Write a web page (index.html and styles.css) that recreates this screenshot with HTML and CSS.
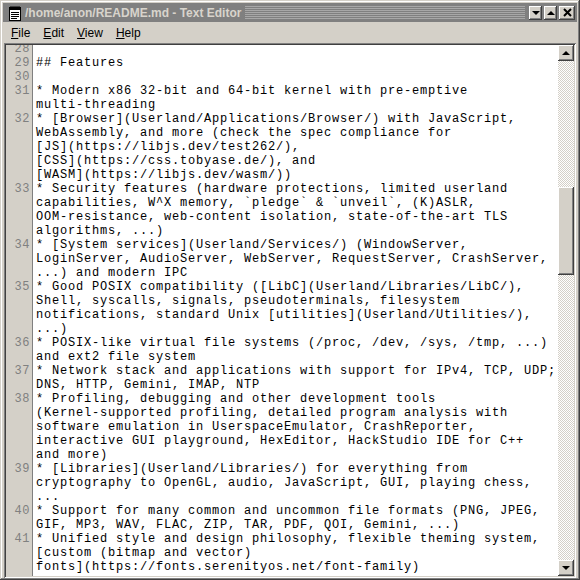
FILE: index.html
```html
<!DOCTYPE html>
<html lang="en">
  <head>
    <link rel="stylesheet" href="styles.css">
  </head>
  <body>
    <div class="window">
      <div class="titlebar">
        <svg class="app-icon" width="16" height="16" viewBox="0 0 16 16">
          <rect x="2.5" y="2.5" width="11" height="13" fill="#fff" stroke="#000"/>
          <rect x="2" y="2" width="12" height="3" fill="#000"/>
          <path d="M4 1v3M6 1v3M8 1v3M10 1v3M12 1v3" stroke="#000"/>
          <path d="M4 7.5h8M4 9.5h8M4 11.5h8M4 13.5h6" stroke="#000"/>
        </svg>
        <span class="title-text">/home/anon/README.md - Text Editor</span>
        <div class="stripes"></div>
        <div class="title-btns">
          <button class="tbtn"><span class="tri-down"></span></button>
          <button class="tbtn"><span class="tri-up"></span></button>
          <button class="tbtn close">
            <svg width="9" height="9" viewBox="0 0 9 9"><path d="M1 1l7 7M8 1l-7 7" stroke="#000" stroke-width="2"/></svg>
          </button>
        </div>
      </div>

      <div class="menubar">
        <span class="menu-item"><u>F</u>ile</span>
        <span class="menu-item"><u>E</u>dit</span>
        <span class="menu-item"><u>V</u>iew</span>
        <span class="menu-item"><u>H</u>elp</span>
      </div>

      <div class="editor-frame">
        <div class="editor">
          <div class="lines">
            <div class="row"><span class="num">28</span><span class="txt"></span></div>
            <div class="row"><span class="num">29</span><span class="txt">## Features</span></div>
            <div class="row"><span class="num">30</span><span class="txt"></span></div>
            <div class="row"><span class="num">31</span><span class="txt">* Modern x86 32-bit and 64-bit kernel with pre-emptive
multi-threading</span></div>
            <div class="row"><span class="num">32</span><span class="txt">* [Browser](Userland/Applications/Browser/) with JavaScript,
WebAssembly, and more (check the spec compliance for
[JS](https://libjs.dev/test262/),
[CSS](https://css.tobyase.de/), and
[WASM](https://libjs.dev/wasm/))</span></div>
            <div class="row"><span class="num">33</span><span class="txt">* Security features (hardware protections, limited userland
capabilities, W^X memory, `pledge` &amp; `unveil`, (K)ASLR,
OOM-resistance, web-content isolation, state-of-the-art TLS
algorithms, ...)</span></div>
            <div class="row"><span class="num">34</span><span class="txt">* [System services](Userland/Services/) (WindowServer,
LoginServer, AudioServer, WebServer, RequestServer, CrashServer,
...) and modern IPC</span></div>
            <div class="row"><span class="num">35</span><span class="txt">* Good POSIX compatibility ([LibC](Userland/Libraries/LibC/),
Shell, syscalls, signals, pseudoterminals, filesystem
notifications, standard Unix [utilities](Userland/Utilities/),
...)</span></div>
            <div class="row"><span class="num">36</span><span class="txt">* POSIX-like virtual file systems (/proc, /dev, /sys, /tmp, ...)
and ext2 file system</span></div>
            <div class="row"><span class="num">37</span><span class="txt">* Network stack and applications with support for IPv4, TCP, UDP;
DNS, HTTP, Gemini, IMAP, NTP</span></div>
            <div class="row"><span class="num">38</span><span class="txt">* Profiling, debugging and other development tools
(Kernel-supported profiling, detailed program analysis with
software emulation in UserspaceEmulator, CrashReporter,
interactive GUI playground, HexEditor, HackStudio IDE for C++
and more)</span></div>
            <div class="row"><span class="num">39</span><span class="txt">* [Libraries](Userland/Libraries/) for everything from
cryptography to OpenGL, audio, JavaScript, GUI, playing chess,
...</span></div>
            <div class="row"><span class="num">40</span><span class="txt">* Support for many common and uncommon file formats (PNG, JPEG,
GIF, MP3, WAV, FLAC, ZIP, TAR, PDF, QOI, Gemini, ...)</span></div>
            <div class="row"><span class="num">41</span><span class="txt">* Unified style and design philosophy, flexible theming system,
[custom (bitmap and vector)
fonts](https://fonts.serenityos.net/font-family)</span></div>
          </div>
        </div>

        <div class="scrollbar">
          <button class="sbtn"><span class="tri-up"></span></button>
          <div class="track">
            <div class="thumb"></div>
          </div>
          <button class="sbtn"><span class="tri-down"></span></button>
        </div>
      </div>
    </div>
  </body>
</html>
```

FILE: styles.css
```css
body {
  margin: 0;
  padding: 0;
  width: 580px;
  height: 580px;
  background-color: #d4d0c8;
  overflow: hidden;
}

div.window {
  box-sizing: border-box;
  width: 580px;
  height: 580px;
  display: flex;
  flex-direction: column;
  padding: 3px 3px 2px 3px;
  background-color: #d4d0c8;
  box-shadow: inset -1px -1px 0 #404040, inset 1px 1px 0 #d4d0c8,
    inset -2px -2px 0 #808080, inset 2px 2px 0 #fff;
}

div.titlebar {
  height: 19px;
  display: flex;
  align-items: center;
  background-color: #808080;
  padding: 0 2px 0 4px;
}

.app-icon {
  flex: none;
  margin-right: 2px;
}

.title-text {
  font-family: "Liberation Sans", Arial, sans-serif;
  font-weight: bold;
  font-size: 12px;
  color: #d8d4cc;
  white-space: nowrap;
  margin-right: 4px;
}

div.stripes {
  flex: 1;
  height: 13px;
  margin-right: 4px;
  background-image: repeating-linear-gradient(#a8a8a8 0 1px, #808080 1px 2px);
}

div.title-btns {
  display: flex;
  gap: 2px;
}

button.tbtn,
button.sbtn {
  box-sizing: border-box;
  padding: 0;
  border: none;
  background-color: #d4d0c8;
  display: flex;
  justify-content: center;
  align-items: center;
  box-shadow: inset -1px -1px 0 #404040, inset 1px 1px 0 #fff,
    inset -2px -2px 0 #808080;
}

button.tbtn {
  width: 13px;
  height: 14px;
}

button.tbtn.close {
  width: 16px;
}

.tri-up {
  width: 0;
  height: 0;
  border-left: 4px solid transparent;
  border-right: 4px solid transparent;
  border-bottom: 4px solid #000;
}

.tri-down {
  width: 0;
  height: 0;
  border-left: 4px solid transparent;
  border-right: 4px solid transparent;
  border-top: 4px solid #000;
}

div.menubar {
  height: 21px;
  display: flex;
  align-items: center;
  padding-left: 8px;
  font-family: "Liberation Sans", Arial, sans-serif;
  font-size: 12px;
  color: #000;
}

.menu-item {
  margin-right: 13px;
}

div.editor-frame {
  flex: 1;
  min-height: 0;
  display: flex;
  margin: 0 1px;
  padding: 2px;
  box-shadow: inset 1px 1px 0 #808080, inset -1px -1px 0 #fff,
    inset 2px 2px 0 #404040, inset -2px -2px 0 #d4d0c8;
}

div.editor {
  flex: 1;
  min-width: 0;
  overflow: hidden;
  background-color: #fff;
  background-image: linear-gradient(to right, #d4d0c8 0 26px, #808080 26px 27px, #fff 27px);
}

div.lines {
  margin-top: -3px;
  font-family: "Liberation Mono", "DejaVu Sans Mono", monospace;
  font-size: 12px;
  letter-spacing: 0.8px;
  line-height: 14px;
}

div.row {
  display: flex;
  min-height: 14px;
}

.num {
  flex: none;
  width: 24px;
  text-align: right;
  letter-spacing: 0.6px;
  color: #808080;
}

.txt {
  padding-left: 6px;
  white-space: pre;
  color: #000;
}

div.scrollbar {
  width: 16px;
  display: flex;
  flex-direction: column;
}

button.sbtn {
  width: 16px;
  height: 16px;
  flex: none;
}

div.track {
  flex: 1;
  background-image: repeating-conic-gradient(#d4d0c8 0 25%, #fff 0 50%);
  background-size: 2px 2px;
  padding-top: 126px;
}

div.thumb {
  height: 88px;
  background-color: #d4d0c8;
  box-shadow: inset -1px -1px 0 #404040, inset 1px 1px 0 #fff,
    inset -2px -2px 0 #808080;
}
```
